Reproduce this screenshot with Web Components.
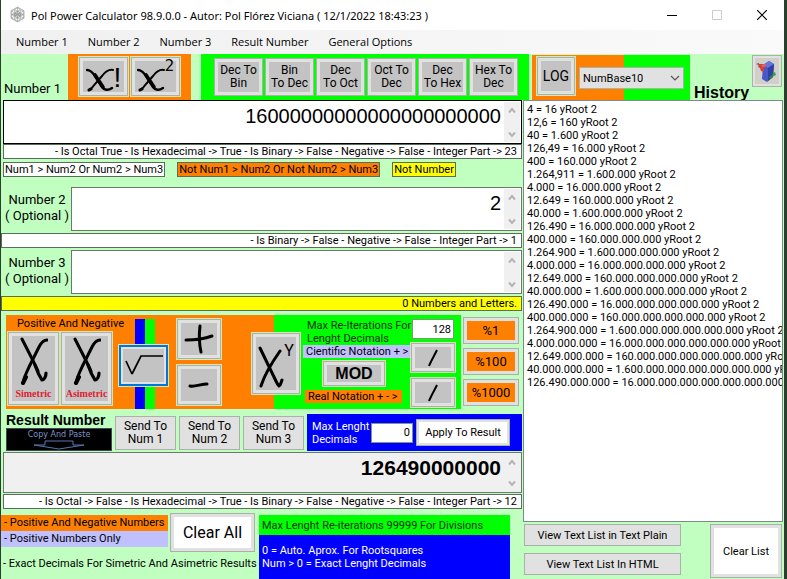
<!DOCTYPE html>
<html lang="en">
<head>
<meta charset="utf-8">
<title>Pol Power Calculator</title>
<style>
  html, body { margin: 0; min-height: 100%; }
  body { background: #2a2f22; font: 11px/13px Roboto, "Liberation Sans", Arial, sans-serif; color: #000; }
</style>
</head>
<body>
<power-calculator></power-calculator>
<script>
const define = (name, html, setup) => {
  const template = document.createElement('template');
  template.innerHTML = '<style>*{box-sizing:border-box}[hidden]{display:none}</style>' + html;
  customElements.define(name, class extends HTMLElement {
    constructor() {
      super();
      this.attachShadow({ mode: 'open' }).append(template.content.cloneNode(true));
    }
    connectedCallback() { if (setup) setup(this, this.shadowRoot); }
  });
};

define('title-bar', `
<style>
  :host { display: flex; align-items: center; height: 30px; background: #fff; padding-left: 9px;
    font-family: "Noto Sans", "Open Sans", sans-serif; font-size: 11px; }
  h1 { margin: 0 auto 0 6px; font: inherit; white-space: nowrap; }
  button { width: 45px; height: 28px; padding: 0; border: 0; background: none; display: grid; place-items: center; }
  .app { margin-bottom: 2px; }
</style>
<svg class="app" width="15" height="17" viewBox="0 0 15 17" fill="none" stroke="#a0a0a0" stroke-width=".7">
  <path d="M7.5 1 14 4.7v7.6L7.5 16 1 12.3V4.7z"/><path d="M7.5 1v15M1 4.7l13 7.6M14 4.7 1 12.3M1 8.5h13"/>
  <circle cx="7.5" cy="5" r="3"/><circle cx="7.5" cy="12" r="3"/><circle cx="4.3" cy="6.8" r="3"/>
  <circle cx="10.7" cy="6.8" r="3"/><circle cx="4.3" cy="10.3" r="3"/><circle cx="10.7" cy="10.3" r="3"/><circle cx="7.5" cy="8.5" r="3" stroke="#778877"/>
</svg>
<h1><slot></slot></h1>
<button aria-label="Minimize"><svg width="10" height="10"><path d="M0 5.5h10" stroke="#000"/></svg></button>
<button aria-label="Maximize" disabled><svg width="10" height="10"><path d="M.5.5h9v9h-9z" fill="none" stroke="#ccc"/></svg></button>
<button aria-label="Close"><svg width="10" height="10"><path d="M0 0l10 10M10 0 0 10" stroke="#000" stroke-width="1.2"/></svg></button>
`);

define('menu-bar', `
<style>
  :host { display: block; background: linear-gradient(90deg, #f0f0f0, #fafafa); }
  nav { display: flex; gap: 20px; padding: 0 15px; height: 24px; align-items: center; }
  button { border: 0; padding: 0; background: none; font: 11px/16px "Open Sans", "Noto Sans", sans-serif; color: #000; }
</style>
<nav><button>Number 1</button><button>Number 2</button><button>Number 3</button><button>Result Number</button><button>General Options</button></nav>
`);

define('push-button', `
<style>
  :host { display: block; flex: none; }
  button { display: flex; align-items: center; justify-content: center; width: 100%; height: 100%; padding: 0;
    border: var(--line, 1px) solid var(--edge, #a8b2a8); background: var(--face, #e1e1e1);
    box-shadow: inset 0 0 0 var(--rim, 0px) #e1e1e1, 0 0 0 var(--halo, 0px) #d6e8b0;
    color: #000; font: inherit; text-align: center; }
</style>
<button><slot></slot></button>
`, (el, root) => {
  if (el.hasAttribute('label')) root.querySelector('button').setAttribute('aria-label', el.getAttribute('label'));
});

define('number-field', `
<style>
  :host { display: flex; align-items: flex-start; font-size: 20px; }
  label { flex: none; width: 68px; padding-top: 5px; font-size: 13px; line-height: 16px; text-align: center; white-space: pre-line; }
  .box { display: flex; flex: 1; min-width: 0; height: var(--h, 44px); border: 1px solid var(--edge, #6a7a6a); background: var(--fill, #fff); padding: 1px; }
  textarea { flex: 1; min-width: 0; height: 100%; border: 0; padding: 2px 3px 0; margin: 0; resize: none; overflow: hidden; outline: 0;
    background: none; color: #000; font: inherit; font-family: "Liberation Sans", Arial, sans-serif; line-height: 24px; text-align: right; }
  .scroll { display: flex; flex-direction: column; justify-content: space-between; align-items: center; width: 16px; padding: 5px 0 4px; background: #f0f0f0; }
</style>
<label for="value"></label>
<div class="box"><textarea id="value" spellcheck="false"></textarea>
  <div class="scroll">
    <svg width="8" height="7"><path d="M1 5.5l3-3.5 3 3.5" fill="none" stroke="#b4b4b4" stroke-width="2"/></svg>
    <svg width="8" height="7"><path d="M1 1.5l3 3.5 3-3.5" fill="none" stroke="#b4b4b4" stroke-width="2"/></svg>
  </div>
</div>
`, (el, root) => {
  const label = root.querySelector('label'), area = root.querySelector('textarea');
  label.textContent = (el.getAttribute('label') || '').replace('|', '\n');
  label.hidden = !el.hasAttribute('label');
  area.value = el.getAttribute('value') || '';
  if (el.hasAttribute('name')) area.setAttribute('aria-label', el.getAttribute('name'));
  area.readOnly = el.hasAttribute('readonly');
});

define('status-line', `
<style>
  :host { display: block; height: 15px; border: 1px solid #5c6c5c; background: var(--fill, #fff); padding: 0 4px; text-align: right; white-space: nowrap; overflow: hidden; }
</style>
<slot></slot>
`);

define('small-input', `
<style>
  :host { display: block; flex: none; }
  input { display: block; width: 100%; height: 20px; border: 1px solid #7a9a7a; background: #fff; padding: 0 2px; margin: 0; font: inherit; color: #000; text-align: right; border-radius: 0; }
</style>
<input type="text">
`, (el, root) => {
  const input = root.querySelector('input');
  input.value = el.getAttribute('value');
  input.setAttribute('aria-label', el.getAttribute('name'));
});

define('script-x', `
<style>:host { display: block; } svg { display: block; }</style>
<svg width="28" height="48" viewBox="0 0 28 48" fill="none" stroke="#000" stroke-linecap="round" stroke-linejoin="round">
  <path d="M2 2C6 10 13 23 18 34" stroke-width="3"/><path d="M15 28c2 6 5 12 7 15 2 0 4-3 4-7" stroke-width="3.2"/>
  <path d="M27 3c-3 0-6 3-8 7L9 30C7 35 4 39 3 46" stroke-width="3"/><path d="M6 40l-3 6" stroke-width="4"/>
</svg>
`);

define('flat-x', `
<style>:host { display: block; } svg { display: block; }</style>
<svg width="28" height="24" viewBox="0 0 28 24" fill="none" stroke="#000" stroke-linecap="round">
  <path d="M1 2c4 0 6 3 8 6l7 11c2 3 6 4 10 1" stroke-width="2.4"/><path d="M9 7l8 12" stroke-width="3.6"/>
  <path d="M27 2c-5-1-8 2-11 6L9 16c-2 3-4 5-6 6" stroke-width="2"/><path d="M3 22l2-1" stroke-width="3"/>
</svg>
`);

define('top-tools', `
<style>
  :host { display: flex; align-items: stretch; height: 46px; }
  .name { width: 67px; padding: 0 0 3px 3px; align-self: flex-end; font-size: 13px; line-height: 16px; }
  .orange { display: flex; gap: 3px; background: #ff8000; padding: 3px 11px 0 11px; }
  .orange push-button { width: 49px; height: 39px; --halo: 1px; }
  push-button { --rim: 3px; --face: #c3c3c3; }
  .green { display: flex; flex: 0 1 auto; gap: 2px; background: #0f0; padding: 4px 11px 0 13px; margin-left: 10px; }
  .green push-button { width: 49px; height: 38px; font-size: 12px; }
  .base { display: flex; margin: 1px 0 0 3px; width: 158px; padding: 2px 0 0 5px; gap: 4px; background: linear-gradient(90deg, #ff8000 58%, #0f0 58%); }
  .base push-button { width: 38px; height: 38px; --halo: 1px; font-size: 14px; }
  select { width: 105px; height: 22px; margin-top: 10px; border: 1px solid #a9b4a9; background: #e1e1e1; color: #000; font: inherit; font-size: 11px; padding: 0 0 0 3px; appearance: none; border-radius: 0;  }
  .pick { position: relative; }
  .pick svg { position: absolute; right: 4px; top: 18px; pointer-events: none; }
  h2 { margin: 0 auto 0 4px; align-self: flex-end; font: bold 16px/15px "Liberation Sans", Arial, sans-serif; }
  .cube { width: 30px; height: 32px; margin: 1px 2px 0 0; --face: #d0d0c8; --rim: 2px; }
  .bang { font: 28px/26px "Liberation Sans", Arial, sans-serif; margin-top: 3px; }
  .two { font: 15px/15px "DejaVu Sans", sans-serif; margin-bottom: 20px; }
  .low { margin-top: 6px; }
</style>
<div class="name">Number 1</div>
<div class="orange">
  <push-button label="X factorial"><flat-x class="low"></flat-x><span class="bang">!</span></push-button>
  <push-button label="X squared"><flat-x class="low"></flat-x><span class="two">2</span></push-button>
</div>
<div class="green">
  <push-button>Dec To<br>Bin</push-button><push-button>Bin<br>To Dec</push-button><push-button>Dec<br>To Oct</push-button>
  <push-button>Oct To<br>Dec</push-button><push-button>Dec<br>To Hex</push-button><push-button>Hex To<br>Dec</push-button>
</div>
<div class="base">
  <push-button>LOG</push-button>
  <div class="pick"><select aria-label="Logarithm base"><option>NumBase10</option></select>
    <svg width="10" height="7"><path d="M1 1l4 4 4-4" fill="none" stroke="#555" stroke-width="1.2"/></svg></div>
</div>
<h2>History</h2>
<push-button class="cube" label="About"><svg width="24" height="24" viewBox="0 0 24 24">
  <path d="M8 6l6-4 5 3-1 13-6 5-5-3z" fill="#4858c8"/><path d="M8 6l6-4 5 3-6 4z" fill="#6474dc"/><path d="M13 9l6-4-1 13-5 4z" fill="#3040a0"/>
  <path d="M4 5h6l1 3-2 1v4l-3-1-1-3-2-1z" fill="#d04040"/><path d="M6 6l4-1 1 2-3 1z" fill="#e86868"/>
  <path d="M1 5l3-1v2" fill="#555"/><path d="M18 14l2-1 1 3-4 2z" fill="#35a055"/><path d="M14 18l4-2v2l-3 2z" fill="#2a8b35"/></svg></push-button>
`);

define('compare-legend', `
<style>
  :host { display: flex; gap: 12px; }
  span { height: 15px; border: 1px solid #5c6c5c; padding: 0 1px; white-space: nowrap; background: #fff; }
  .no { background: #ff8000; }
  .nan { background: #ff0; }
</style>
<span>Num1 &gt; Num2 Or Num2 &gt; Num3</span><span class="no">Not Num1 &gt; Num2 Or Not Num2 &gt; Num3</span><span class="nan">Not Number</span>
`);

define('operator-panel', `
<style>
  :host { display: flex; gap: 2px; }
  .board { display: flex; flex: 1; min-width: 0; height: 94px; background: linear-gradient(90deg, #ff8000 59%, #0f0 59%); }
  push-button { --rim: 3px; --face: #c3c3c3; --halo: 1px; }
  .powers { width: 106px; padding: 2px 0 0 2px; }
  .powers p { margin: 0 0 2px 9px; white-space: nowrap; line-height: 13px; }
  .pair { display: flex; gap: 2px; }
  .pair push-button { width: 51px; height: 73px; }
  .stack { display: flex; flex-direction: column; align-items: center; gap: 3px; }
  .stack span { font: bold 10px/12px "Liberation Serif", serif; color: #e02030; }
  .root { width: 49px; margin-left: 7px; padding: 30px 0 0; background: linear-gradient(90deg, transparent 16px, #00f 16px, #00f 26px, #0f0 26px, #0f0 36px, transparent 36px) 0 4px no-repeat; }
  .root push-button { height: 41px; --line: 2px; --edge: #0078d7; --rim: 2px; }
  .signs { display: flex; flex-direction: column; gap: 6px; padding-top: 4px; margin-left: 9px; }
  .signs push-button { width: 44px; height: 40px; }
  .xy { width: 48px; height: 61px; margin: 18px 0 0 31px; }
  .xy span { font-size: 16px; margin: 0 0 26px; }
  .xy svg { display: block; margin: 8px 0 0; }
  .notes { flex: 1; min-width: 106px; padding: 4px 0 0 3px; }
  .notes p { margin: 0 0 0 4px; white-space: nowrap; color: #143014; }
  .tag { display: block; width: max-content; padding: 0 4px 0 3px; background: #c0c0ff; white-space: nowrap; line-height: 13px; }
  .real { margin-left: 2px; background: #ff8000; }
  .notes push-button { width: 62px; height: 25px; margin: 3px 0 4px 20px; font: bold 16px/18px "Liberation Sans", Arial, sans-serif; }
  .divs { width: 50px; display: flex; flex-direction: column; gap: 6px; padding: 4px 6px 0 0; }
  .divs small-input { margin: 0 0 -2px 1px; width: 42px; }
  .divs push-button { height: 29px; }
  .percent { display: flex; flex-direction: column; gap: 4px; width: 56px; margin-right: 3px; padding-top: 2px; }
  .percent push-button { height: 27px; --face: #ff8000; --halo: 0; font-size: 13px; }
</style>
<div class="board">
  <div class="powers"><p>Positive And Negative</p>
    <div class="pair">
      <push-button><div class="stack"><script-x></script-x><span>Simetric</span></div></push-button>
      <push-button><div class="stack"><script-x></script-x><span>Asimetric</span></div></push-button>
    </div>
  </div>
  <div class="root"><push-button label="Square root"><svg width="40" height="24"><path d="M2 7l6 13M8 20L17 2h22" fill="none" stroke="#000" stroke-width="1.7"/></svg></push-button></div>
  <div class="signs">
    <push-button label="Add"><svg width="32" height="30"><path d="M3 16c8 0 18-1 26-4M17 2c-1 8-1 17 1 26" fill="none" stroke="#000" stroke-width="3" stroke-linecap="round"/></svg></push-button>
    <push-button label="Subtract"><svg width="22" height="10"><path d="M2 6c5 1 11-2 17-2" fill="none" stroke="#000" stroke-width="3" stroke-linecap="round"/></svg></push-button>
  </div>
  <push-button class="xy" label="X to the power Y"><svg width="26" height="44" viewBox="0 0 26 44" fill="none" stroke="#000" stroke-linecap="round"><path d="M2 2l14 29c2 4 3 7 5 9 2-1 2-4 3-6M22 5C15 15 7 27 3 40" stroke-width="3"/></svg><span>Y</span></push-button>
  <div class="notes">
    <p>Max Re-Iterations For<br>Lenght Decimals</p>
    <span class="tag">Cientific Notation + &gt;</span>
    <push-button>MOD</push-button>
    <span class="tag real">Real Notation + - &gt;</span>
  </div>
  <div class="divs">
    <small-input value="128" name="Max Re-Iterations For Lenght Decimals"></small-input>
    <push-button label="Divide, cientific notation"><svg width="12" height="20"><path d="M10 2C7 8 4 13 2 18" fill="none" stroke="#000" stroke-width="2"/></svg></push-button>
    <push-button label="Divide, real notation"><svg width="12" height="20"><path d="M10 2C7 8 4 13 2 18" fill="none" stroke="#000" stroke-width="2"/></svg></push-button>
  </div>
</div>
<div class="percent"><push-button>%1</push-button><push-button>%100</push-button><push-button>%1000</push-button></div>
`);

define('result-tools', `
<style>
  :host { display: flex; align-items: flex-end; gap: 3px; }
  .head { width: 107px; margin-right: -1px; }
  h2 { margin: 0; font: bold 14px/15px "Liberation Sans", Arial, sans-serif; white-space: nowrap; }
  .copy { display: flex; flex-direction: column; align-items: center; width: 106px; height: 23px; padding: 0; border: 1px solid #445; background: #000; color: #7f94c8;
    font: 8px/11px "DejaVu Sans", sans-serif; }
  .copy svg { flex: none; }
  .send { width: 61px; height: 34px; margin-bottom: 1px; }
  .limit { display: flex; flex: 1; align-items: center; height: 37px; background: #00f; color: #fff; padding: 0 12px 0 5px; }
  .limit span { flex: 1; white-space: nowrap; }
  small-input { width: 42px; color: #000; }
  .limit push-button { width: 94px; height: 27px; margin-left: 3px; --face: #fff; --rim: 2px; font-size: 11px; }
  push-button { font-size: 12px; }
</style>
<div class="head"><h2>Result Number</h2>
  <button class="copy">Copy And Paste<svg width="56" height="10"><path d="M14 1v4H3l25 4 25-4H42V1z" fill="none" stroke="#5878b0"/></svg></button></div>
<push-button class="send">Send To<br>Num 1</push-button>
<push-button class="send">Send To<br>Num 2</push-button>
<push-button class="send">Send To<br>Num 3</push-button>
<div class="limit"><span>Max Lenght<br>Decimals</span><small-input value="0" name="Max Lenght Decimals"></small-input><push-button>Apply To Result</push-button></div>
`);

define('footer-notes', `
<style>
  :host { display: grid; grid-template-columns: 167px 85px 1fr; grid-template-rows: 40px 1fr; column-gap: 2px; }
  .signs { padding-top: 2px; }
  .signs div { height: 16px; padding: 0 3px; line-height: 15px; white-space: nowrap; }
  .any { background: #ff8000; } .plus { background: #c0c0ff; }
  push-button { height: 39px; font-size: 16px; --face: #fff; --rim: 3px; }
  .exact { grid-column: 1 / 3; padding: 3px 0 0 2px; line-height: 15px; white-space: nowrap; }
  .info { grid-column: 3; grid-row: 1 / 3; margin: 2px 12px 0 2px; display: flex; flex-direction: column; white-space: nowrap; }
  .max { background: #0f0; color: #143014; padding: 4px 3px 3px; }
  .auto { flex: 1; background: #00f; color: #fff; padding: 9px 3px 0; }
</style>
<div class="signs"><div class="any">- Positive And Negative Numbers</div><div class="plus">- Positive Numbers Only</div></div>
<push-button>Clear All</push-button>
<div class="info"><div class="max">Max Lenght Re-iterations 99999 For Divisions</div><div class="auto">0 = Auto. Aprox. For Rootsquares<br>Num &gt; 0 = Exact Lenght Decimals</div></div>
<div class="exact">- Exact Decimals For Simetric And Asimetric Results</div>
`);

define('history-panel', `
<style>
  :host { display: flex; flex-direction: column; min-width: 0; padding-right: 1px; }
  ul { flex: 1; margin: 0; padding: 2px 0 2px 3px; list-style: none; border: 1px solid #7a8a8a; background: #fff; overflow: hidden; white-space: nowrap; }
  .actions { display: flex; justify-content: space-between; padding: 2px 1px 1px; }
  .views { display: flex; flex-direction: column; gap: 7px; }
  .views push-button { width: 157px; height: 22px; }
  .clear { width: 72px; height: 54px; --face: #fff; --rim: 3px; }
</style>
<ul></ul>
<div class="actions"><div class="views"><push-button>View Text List in Text Plain</push-button><push-button>View Text List In HTML</push-button></div>
<push-button class="clear">Clear List</push-button></div>
`, (el, root) => {
  const entries = [
    '4 = 16 yRoot 2', '12,6 = 160 yRoot 2', '40 = 1.600 yRoot 2', '126,49 = 16.000 yRoot 2', '400 = 160.000 yRoot 2',
    '1.264,911 = 1.600.000 yRoot 2', '4.000 = 16.000.000 yRoot 2', '12.649 = 160.000.000 yRoot 2',
    '40.000 = 1.600.000.000 yRoot 2', '126.490 = 16.000.000.000 yRoot 2', '400.000 = 160.000.000.000 yRoot 2',
    '1.264.900 = 1.600.000.000.000 yRoot 2', '4.000.000 = 16.000.000.000.000 yRoot 2',
    '12.649.000 = 160.000.000.000.000 yRoot 2', '40.000.000 = 1.600.000.000.000.000 yRoot 2',
    '126.490.000 = 16.000.000.000.000.000 yRoot 2', '400.000.000 = 160.000.000.000.000.000 yRoot 2',
    '1.264.900.000 = 1.600.000.000.000.000.000 yRoot 2', '4.000.000.000 = 16.000.000.000.000.000.000 yRoot',
    '12.649.000.000 = 160.000.000.000.000.000.000 yRo', '40.000.000.000 = 1.600.000.000.000.000.000.000 yF',
    '126.490.000.000 = 16.000.000.000.000.000.000.000'
  ];
  root.querySelector('ul').replaceChildren(...entries.map(text => {
    const item = document.createElement('li');
    item.textContent = text;
    return item;
  }));
});

define('power-calculator', `
<style>
  :host { display: flex; flex-direction: column; min-height: 100vh; border: solid #2a3f2c; border-width: 0 3px 2px 1px; background: #c0ffc0; }
  main { flex: 1; display: grid; grid-template-columns: minmax(0, 2fr) minmax(0, 1fr); }
  .work { display: flex; flex-direction: column; padding-right: 1px; }
  .inset { margin-left: 2px; }
  status-line { margin: 2px 0; }
  .first { --edge: #000; margin-left: 2px; }
  .first + status-line { margin: 0 0 3px 2px; }
  .second { margin-top: 10px; }
  .yellow { --fill: #ff0; margin-bottom: 4px; }
  operator-panel { margin: 0 0 4px 5px; }
  result-tools { margin: 0 0 1px 5px; }
  .result { --h: 41px; --fill: #f0f0f0; font-size: 21px; font-weight: bold; margin-left: 2px; }
  .result + status-line { margin: 1px 0 4px 2px; }
  footer-notes { flex: 1; }
</style>
<title-bar>Pol Power Calculator 98.9.0.0 - Autor: Pol Flórez Viciana ( 12/1/2022 18:43:23 )</title-bar>
<menu-bar></menu-bar>
<top-tools></top-tools>
<main>
  <section class="work">
    <number-field class="first" name="Number 1" value="16000000000000000000000"></number-field>
    <status-line>- Is Octal True - Is Hexadecimal -&gt; True - Is Binary -&gt; False - Negative -&gt; False - Integer Part -&gt; 23</status-line>
    <compare-legend class="inset"></compare-legend>
    <number-field class="second inset" label="Number 2|( Optional )" value="2"></number-field>
    <status-line>- Is Binary -&gt; False - Negative -&gt; False - Integer Part -&gt; 1</status-line>
    <number-field class="inset" label="Number 3|( Optional )"></number-field>
    <status-line class="yellow">0 Numbers and Letters.</status-line>
    <operator-panel></operator-panel>
    <result-tools></result-tools>
    <number-field class="result" name="Result Number" value="126490000000" readonly></number-field>
    <status-line>- Is Octal -&gt; False - Is Hexadecimal -&gt; True - Is Binary -&gt; False - Negative -&gt; False - Integer Part -&gt; 12</status-line>
    <footer-notes></footer-notes>
  </section>
  <history-panel></history-panel>
</main>
`);
</script>
</body>
</html>
